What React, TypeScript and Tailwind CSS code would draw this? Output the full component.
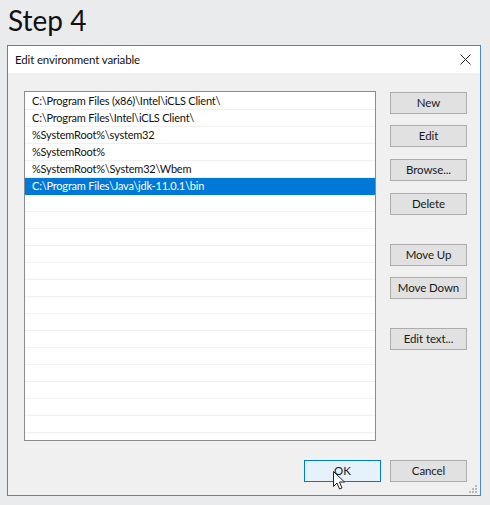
import React from "react";

const rows = [
  "C:\\Program Files (x86)\\Intel\\iCLS Client\\",
  "C:\\Program Files\\Intel\\iCLS Client\\",
  "%SystemRoot%\\system32",
  "%SystemRoot%",
  "%SystemRoot%\\System32\\Wbem",
  "C:\\Program Files\\Java\\jdk-11.0.1\\bin",
];

const font = { fontFamily: 'Lato, "Noto Sans", sans-serif' };

function Btn({ label, className = "" }: { label: string; className?: string }) {
  return (
    <div
      className={`flex h-[22px] w-[77px] items-center justify-center border border-[#adadad] bg-[#e1e1e1] text-[11.5px] tracking-[-0.1px] text-[#1a1a1a] ${className}`}
    >
      {label}
    </div>
  );
}

export default function App() {
  const empty = Array.from({ length: 15 });
  return (
    <div className="h-[505px] w-[490px] overflow-hidden bg-[#e9ebed]" style={font}>
      <div className="h-[45px] pl-[8px] pt-[1px] text-[28px] leading-[38px] text-[#111]">Step 4</div>
      <div className="relative ml-[7px] flex h-[451px] w-[474px] flex-col border border-[#4a88c0] bg-[#f0f0f0]">
        <div className="flex h-[27px] items-center justify-between bg-white pl-[7px] pr-[9px] text-[11.5px] tracking-[-0.15px] text-[#111]">
          <span>Edit environment variable</span>
          <svg width="11" height="11" viewBox="0 0 11 11">
            <path d="M0.5 0.5 L10.5 10.5 M10.5 0.5 L0.5 10.5" stroke="#222" strokeWidth="1" />
          </svg>
        </div>
        <div className="flex pl-[16px] pt-[18px]">
          <div className="flex h-[350px] w-[352px] flex-col overflow-hidden border border-[#8c8c8c] bg-white pt-[1px]">
            {rows.map((r, i) => (
              <div
                key={i}
                className={`flex h-[17px] shrink-0 items-center whitespace-nowrap pl-[7px] text-[11px] tracking-[-0.2px] ${
                  i === 5 ? "bg-[#0078d7] text-white" : "border-b border-[#f0f0f0] text-[#111]"
                }`}
              >
                {r}
              </div>
            ))}
            {empty.map((_, i) => (
              <div key={i} className="h-[17px] shrink-0 border-b border-[#f0f0f0]" />
            ))}
          </div>
          <div className="ml-[14px] flex flex-col pt-[1px]">
            <Btn label="New" />
            <Btn label="Edit" className="mt-[11px]" />
            <Btn label="Browse..." className="mt-[12px]" />
            <Btn label="Delete" className="mt-[12px]" />
            <Btn label="Move Up" className="mt-[29px]" />
            <Btn label="Move Down" className="mt-[11px]" />
            <Btn label="Edit text..." className="mt-[29px]" />
          </div>
        </div>
        <div className="mt-[19px] flex justify-end gap-[9px] pr-[13px]">
          <div className="flex h-[22px] w-[77px] items-center justify-center border border-[#0078d7] bg-[#e5f1fb] text-[11.5px] text-[#1a1a1a]">
            OK
          </div>
          <Btn label="Cancel" />
        </div>
        <svg className="absolute left-[325px] top-[425px]" width="13" height="20" viewBox="0 0 13 20">
          <path d="M0.5 0.5 L0.5 15.5 L4 12 L6.5 18 L9 17 L6.5 11 L11.5 11 Z" fill="white" stroke="#222" strokeWidth="1" strokeLinejoin="round" />
        </svg>
        <svg className="absolute bottom-[2px] right-[3px]" width="8" height="8" viewBox="0 0 8 8">
          <rect x="6" y="0" width="2" height="2" fill="#b8b8b8" />
          <rect x="3" y="3" width="2" height="2" fill="#b8b8b8" />
          <rect x="6" y="3" width="2" height="2" fill="#b8b8b8" />
          <rect x="0" y="6" width="2" height="2" fill="#b8b8b8" />
          <rect x="3" y="6" width="2" height="2" fill="#b8b8b8" />
          <rect x="6" y="6" width="2" height="2" fill="#b8b8b8" />
        </svg>
      </div>
    </div>
  );
}
